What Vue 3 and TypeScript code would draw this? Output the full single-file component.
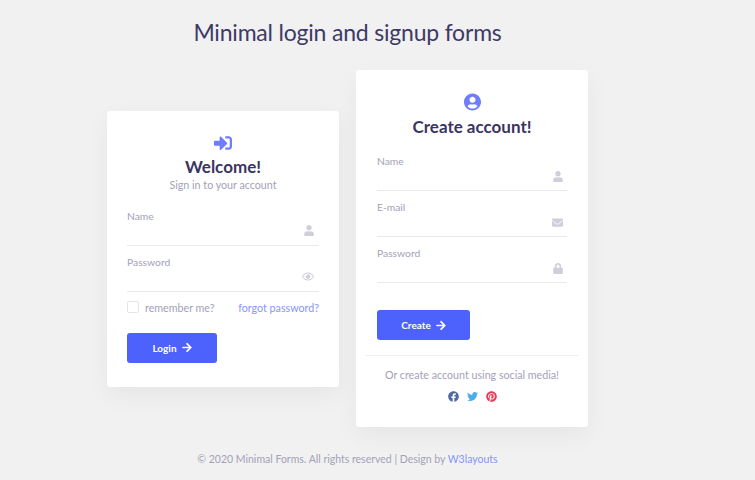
<template>
  <div class="page">
    <h1 class="title">Minimal login and signup forms</h1>

    <div class="forms">
      <form class="card login" @submit.prevent>
        <div class="head">
          <svg class="head-icon" viewBox="0 0 512 512" width="18" height="18">
            <path d="M416 448h-84c-6.600 0-12-5.400-12-12v-40c0-6.600 5.400-12 12-12h84c17.700 0 32-14.300 32-32V160c0-17.700-14.300-32-32-32h-84c-6.600 0-12-5.400-12-12V76c0-6.600 5.400-12 12-12h84c53 0 96 43 96 96v192c0 53-43 96-96 96zm-47-201L201 79c-15-15-41-4.500-41 17v96H24c-13.300 0-24 10.700-24 24v96c0 13.300 10.700 24 24 24h136v96c0 21.500 26 32 41 17l168-168c9.300-9.400 9.300-24.600 0-34z" />
          </svg>
          <h2>Welcome!</h2>
          <p class="sub">Sign in to your account</p>
        </div>

        <label class="field">
          <span>Name</span>
          <div class="line">
            <svg class="ico" viewBox="0 0 448 512" width="10" height="11"><path :d="userPath" /></svg>
          </div>
        </label>
        <label class="field">
          <span>Password</span>
          <div class="line">
            <svg class="ico" viewBox="0 0 576 512" width="12" height="11"><path :d="eyePath" /></svg>
          </div>
        </label>

        <div class="options">
          <label class="remember"><i class="box"></i>remember me?</label>
          <a class="link">forgot password?</a>
        </div>

        <button class="btn btn-login" type="button">Login <svg viewBox="0 0 448 512" width="10" height="11"><path :d="arrowPath" /></svg></button>
      </form>

      <form class="card signup" @submit.prevent>
        <div class="head">
          <svg class="head-icon" viewBox="0 0 496 512" width="17" height="18">
            <path d="M248 8C111 8 0 119 0 256s111 248 248 248 248-111 248-248S385 8 248 8zm0 96c48.600 0 88 39.400 88 88s-39.400 88-88 88-88-39.400-88-88 39.400-88 88-88zm0 344c-58.700 0-111.300-26.600-146.500-68.200 18.800-35.400 55.600-59.800 98.500-59.800 2.400 0 4.800.4 7.100 1.100 13 4.200 26.600 6.900 40.900 6.900 14.300 0 28-2.700 40.900-6.900 2.300-.7 4.700-1.100 7.100-1.100 42.900 0 79.700 24.400 98.500 59.800C359.300 421.400 306.700 448 248 448z" />
          </svg>
          <h2>Create account!</h2>
        </div>

        <label class="field">
          <span>Name</span>
          <div class="line">
            <svg class="ico" viewBox="0 0 448 512" width="10" height="11"><path :d="userPath" /></svg>
          </div>
        </label>
        <label class="field">
          <span>E-mail</span>
          <div class="line">
            <svg class="ico" viewBox="0 0 512 512" width="11" height="11">
              <path d="M502.300 190.800c3.900-3.100 9.700-.2 9.700 4.700V400c0 26.500-21.500 48-48 48H48c-26.500 0-48-21.500-48-48V195.600c0-5 5.700-7.800 9.700-4.700 22.400 17.400 52.100 39.500 154.100 113.600 21.100 15.400 56.700 47.800 92.200 47.600 35.700.3 72-32.800 92.300-47.600 102-74.100 131.600-96.300 154-113.700zM256 320c23.200.4 56.600-29.200 73.400-41.400 132.700-96.300 142.800-104.700 173.400-128.700 5.800-4.500 9.200-11.500 9.200-18.900v-19c0-26.500-21.500-48-48-48H48C21.500 64 0 85.500 0 112v19c0 7.400 3.400 14.300 9.200 18.900 30.600 23.900 40.700 32.400 173.400 128.700 16.800 12.200 50.200 41.800 73.400 41.400z" />
            </svg>
          </div>
        </label>
        <label class="field">
          <span>Password</span>
          <div class="line">
            <svg class="ico" viewBox="0 0 448 512" width="10" height="11">
              <path d="M400 224h-24v-72C376 68.200 307.800 0 224 0S72 68.200 72 152v72H48c-26.500 0-48 21.500-48 48v192c0 26.500 21.500 48 48 48h352c26.500 0 48-21.500 48-48V272c0-26.500-21.500-48-48-48zm-104 0H152v-72c0-39.700 32.300-72 72-72s72 32.300 72 72v72z" />
            </svg>
          </div>
        </label>

        <button class="btn btn-create" type="button">Create <svg viewBox="0 0 448 512" width="10" height="11"><path :d="arrowPath" /></svg></button>

        <div class="social">
          <p>Or create account using social media!</p>
          <div class="social-icons">
            <svg viewBox="0 0 512 512" width="11" height="11" fill="#4f6aa3">
              <path d="M504 256C504 119 393 8 256 8S8 119 8 256c0 123.800 90.700 226.400 209.300 245V327.700h-63V256h63v-54.600c0-62.200 37-96.500 93.700-96.500 27.100 0 55.500 4.800 55.500 4.800v61h-31.300c-30.800 0-40.400 19.100-40.400 38.700V256h68.800l-11 71.700h-57.800V501C413.300 482.400 504 379.800 504 256z" />
            </svg>
            <svg viewBox="0 0 512 512" width="11" height="11" fill="#4aaee8">
              <path d="M459.400 151.700c.3 4.500.3 9.100.3 13.600 0 138.700-105.600 298.600-298.600 298.600-59.500 0-114.700-17.200-161.100-47.100 8.400 1 16.600 1.300 25.300 1.300 49.100 0 94.200-16.600 130.300-44.800-46.100-1-84.800-31.200-98.100-72.800 6.500 1 13 1.600 19.800 1.600 9.400 0 18.800-1.300 27.600-3.600-48.100-9.700-84.100-52-84.100-103v-1.300c14 7.800 30.200 12.700 47.400 13.300-28.300-18.800-46.800-51-46.800-87.400 0-19.500 5.200-37.400 14.300-53 51.700 63.700 129.300 105.300 216.400 109.800-1.600-7.800-2.600-15.900-2.600-24 0-57.800 46.800-104.900 104.900-104.900 30.200 0 57.500 12.700 76.700 33.100 23.700-4.500 46.500-13.300 66.600-25.300-7.800 24.200-24.400 44.800-46.100 57.800 21.100-2.300 41.600-8.100 60.400-16.200-14.300 20.800-32.200 39.300-52.600 54.300z" />
            </svg>
            <svg viewBox="0 0 496 512" width="11" height="11" fill="#ec3a57">
              <path d="M496 256c0 137-111 248-248 248-25.600 0-50.200-3.900-73.400-11.100 10.100-16.500 25.200-43.500 30.800-65 3-11.600 15.400-59 15.400-59 8.100 15.400 31.700 28.500 56.800 28.500 74.800 0 128.700-68.800 128.700-154.300 0-81.900-66.900-143.200-152.900-143.200-107 0-163.900 71.800-163.900 150.100 0 36.400 19.400 81.700 50.300 96.100 4.700 2.200 7.200 1.200 8.300-3.300.8-3.400 5-20.300 6.900-28.100.6-2.500.3-4.700-1.700-7.100-10.100-12.500-18.300-35.300-18.300-56.600 0-54.700 41.400-107.600 112-107.600 60.900 0 103.600 41.500 103.600 100.900 0 67.100-33.900 113.600-78 113.600-24.300 0-42.600-20.100-36.700-44.800 7-29.500 20.500-61.300 20.500-82.600 0-19-10.200-34.900-31.400-34.900-24.900 0-44.900 25.700-44.900 60.200 0 22 7.400 36.800 7.400 36.800s-24.500 103.800-29 123.200c-5 21.400-3 51.600-.9 71.200C65.400 450.900 0 361.100 0 256 0 119 111 8 248 8s248 111 248 248z" />
            </svg>
          </div>
        </div>
      </form>
    </div>

    <p class="copy">© 2020 Minimal Forms. All rights reserved | Design by <a class="link">W3layouts</a></p>
  </div>
</template>

<script setup lang="ts">
const userPath =
  'M224 256c70.700 0 128-57.300 128-128S294.700 0 224 0 96 57.300 96 128s57.300 128 128 128zm89.600 32h-16.700c-22.200 10.200-46.900 16-72.900 16s-50.600-5.800-72.900-16h-16.700C60.200 288 0 348.200 0 422.400V464c0 26.500 21.500 48 48 48h352c26.500 0 48-21.500 48-48v-41.600c0-74.200-60.200-134.400-134.400-134.400z'
const eyePath =
  'M288 144a110.940 110.940 0 0 0-31.240 5 55.400 55.400 0 0 1 7.240 27 56 56 0 0 1-56 56 55.400 55.400 0 0 1-27-7.240A111.710 111.710 0 1 0 288 144zm284.520 97.400C518.290 135.590 410.930 64 288 64S57.680 135.640 3.480 241.410a32.350 32.350 0 0 0 0 29.190C57.710 376.410 165.070 448 288 448s230.320-71.640 284.520-177.410a32.350 32.350 0 0 0 0-29.190zM288 400c-98.650 0-189.090-55-237.930-144C98.910 167 189.340 112 288 112s189.090 55 237.930 144C477.100 345 386.660 400 288 400z'
const arrowPath =
  'M190.500 66.900l22.200-22.200c9.400-9.400 24.600-9.400 33.900 0L441 239c9.400 9.400 9.400 24.600 0 33.900L246.600 467.300c-9.400 9.400-24.600 9.400-33.900 0l-22.200-22.200c-9.500-9.500-9.300-25 .4-34.300L311.400 296H24c-13.300 0-24-10.700-24-24v-32c0-13.300 10.700-24 24-24h287.400L190.900 101.200c-9.800-9.300-10-24.800-.4-34.300z'
</script>

<style>
html,
body {
  margin: 0;
  background: #f1f1f1;
}
</style>

<style scoped>
.page {
  width: 695px;
  height: 480px;
  overflow: hidden;
  padding-top: 15px;
  box-sizing: border-box;
  font-family: Lato, "Noto Sans", sans-serif;
  color: #a3a1b8;
}

.title {
  margin: 0;
  text-align: center;
  font-size: 23px;
  line-height: 35px;
  font-weight: 400;
  letter-spacing: -0.2px;
  color: #3e3a68;
}

.forms {
  display: flex;
  justify-content: center;
  align-items: center;
  gap: 17px;
  margin-top: 20px;
}

.card {
  width: 232px;
  box-sizing: border-box;
  background: #fff;
  border-radius: 3px;
  box-shadow: 0 8px 24px rgba(0, 0, 0, 0.05);
}

.login {
  height: 276px;
  padding: 23px 20px 0;
}

.signup {
  height: 357px;
  padding: 23px 21px 0;
}

.head {
  text-align: center;
  margin-bottom: 16px;
}

.head-icon {
  display: block;
  margin: 0 auto;
  fill: #6d7dfc;
}

.head h2 {
  margin: 4px 0 0;
  font-size: 17px;
  line-height: 22px;
  font-weight: 700;
  color: #3a3560;
}

.signup .head h2 {
  margin-top: 5px;
}

.sub {
  margin: -1px 0 0;
  font-size: 10.700px;
  line-height: 15px;
}

.login .head {
  margin-bottom: 17px;
}

.field {
  display: block;
  height: 46px;
  font-size: 10.300px;
}

.field span {
  display: block;
  line-height: 14px;
}

.line {
  display: flex;
  justify-content: flex-end;
  align-items: center;
  height: 23px;
  box-sizing: border-box;
  border-bottom: 1px solid #e8e8ee;
  padding: 0 5px 6px 0;
}

.signup .line {
  padding-right: 4px;
}

.ico {
  fill: #cfcfdc;
}

.options {
  display: flex;
  justify-content: space-between;
  align-items: center;
  margin-top: -1px;
  font-size: 10.700px;
  line-height: 15px;
}

.remember {
  display: flex;
  align-items: center;
}

.box {
  width: 10px;
  height: 10px;
  border: 1px solid #e3e3ea;
  border-radius: 2px;
  margin-right: 6px;
}

.link {
  color: #8694fd;
}

.btn {
  display: flex;
  justify-content: center;
  align-items: center;
  gap: 5px;
  height: 30px;
  border: none;
  border-radius: 3px;
  background: #4d61fc;
  color: #fff;
  font-family: inherit;
  font-size: 10px;
  font-weight: 700;
}

.btn svg {
  fill: #fff;
}

.btn-login {
  width: 90px;
  margin-top: 18px;
}

.btn-create {
  width: 93px;
  margin-top: 18px;
}

.social {
  margin: 15px -12px 0;
  border-top: 1px solid #f1f1f4;
  text-align: center;
}

.social p {
  margin: 11px 0 0;
  font-size: 10.700px;
  line-height: 15px;
}

.social-icons {
  display: flex;
  justify-content: center;
  gap: 8px;
  margin-top: 9px;
}

.copy {
  margin: 25px 0 0;
  text-align: center;
  font-size: 10.500px;
  line-height: 15px;
}
</style>
